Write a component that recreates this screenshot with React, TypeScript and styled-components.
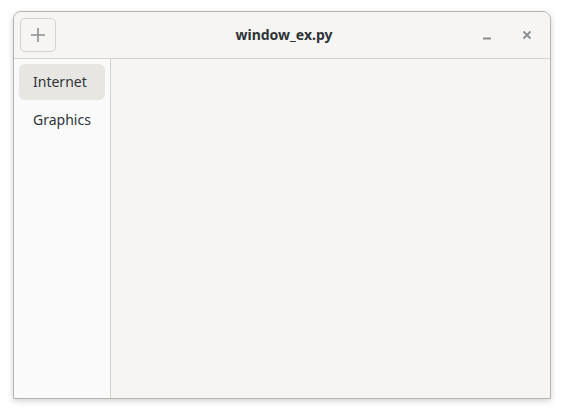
import React from "react";
import styled, { createGlobalStyle } from "styled-components";

const Global = createGlobalStyle`
  html, body { margin: 0; padding: 0; background: #ffffff; }
  body { font-family: "Noto Sans", "DejaVu Sans", sans-serif; }
`;

const Page = styled.div`
  padding: 11px 0 0 13px;
  width: 564px;
  height: 415px;
  box-sizing: border-box;
`;

const Window = styled.div`
  width: 538px;
  height: 388px;
  box-sizing: border-box;
  border: 1px solid #b6b3b0;
  border-radius: 8px 8px 0 0;
  background: #f6f5f4;
  box-shadow: 0 2px 6px rgba(0, 0, 0, 0.18);
  display: flex;
  flex-direction: column;
  overflow: hidden;
`;

const HeaderBar = styled.div`
  height: 47px;
  flex: none;
  box-sizing: border-box;
  border-bottom: 1px solid #d8d4d0;
  display: grid;
  grid-template-columns: 1fr auto 1fr;
  align-items: center;
  padding: 0 6px;
  background: #f6f5f4;
`;

const Left = styled.div`
  display: flex;
  align-items: center;
`;

const Right = styled.div`
  display: flex;
  align-items: center;
  justify-content: flex-end;
  gap: 16px;
  padding-right: 5px;
`;

const AddButton = styled.div`
  width: 36px;
  height: 34px;
  box-sizing: border-box;
  border: 1px solid #d6d2cd;
  border-radius: 5px;
  display: flex;
  align-items: center;
  justify-content: center;
  background: #f6f5f4;
`;

const Title = styled.div`
  font-weight: 700;
  font-size: 14px;
  color: #2e3436;
  padding-left: 4px;
  padding-bottom: 2px;
`;

const WinButton = styled.div`
  width: 24px;
  height: 24px;
  display: flex;
  align-items: center;
  justify-content: center;
`;

const Body = styled.div`
  flex: 1;
  display: flex;
  min-height: 0;
`;

const Sidebar = styled.div`
  width: 97px;
  flex: none;
  box-sizing: border-box;
  background: #fafafa;
  border-right: 1px solid #d5d1cd;
  padding: 5px 5px;
  display: flex;
  flex-direction: column;
  gap: 2px;
`;

const Row = styled.div<{ $active?: boolean }>`
  height: 36px;
  box-sizing: border-box;
  padding-bottom: 2px;
  border-radius: 6px;
  background: ${(p) => (p.$active ? "#e8e6e3" : "transparent")};
  display: flex;
  align-items: center;
  padding-left: 14px;
  font-size: 14px;
  color: #2e3436;
`;

const Content = styled.div`
  flex: 1;
  background: #f6f5f4;
`;

export default function App() {
  return (
    <>
      <Global />
      <Page>
        <Window>
          <HeaderBar>
            <Left>
              <AddButton>
                <svg width="16" height="16" viewBox="0 0 16 16">
                  <path d="M8 1v14M1 8h14" stroke="#8b8e8f" strokeWidth="1.6" fill="none" />
                </svg>
              </AddButton>
            </Left>
            <Title>window_ex.py</Title>
            <Right>
              <WinButton>
                <svg width="10" height="10" viewBox="0 0 10 10">
                  <path d="M1 8.5h8" stroke="#8b8e8f" strokeWidth="1.8" />
                </svg>
              </WinButton>
              <WinButton>
                <svg width="10" height="10" viewBox="0 0 10 10">
                  <path d="M1.5 1.5l7 7M8.5 1.5l-7 7" stroke="#8b8e8f" strokeWidth="1.8" />
                </svg>
              </WinButton>
            </Right>
          </HeaderBar>
          <Body>
            <Sidebar>
              <Row $active>Internet</Row>
              <Row>Graphics</Row>
            </Sidebar>
            <Content />
          </Body>
        </Window>
      </Page>
    </>
  );
}
